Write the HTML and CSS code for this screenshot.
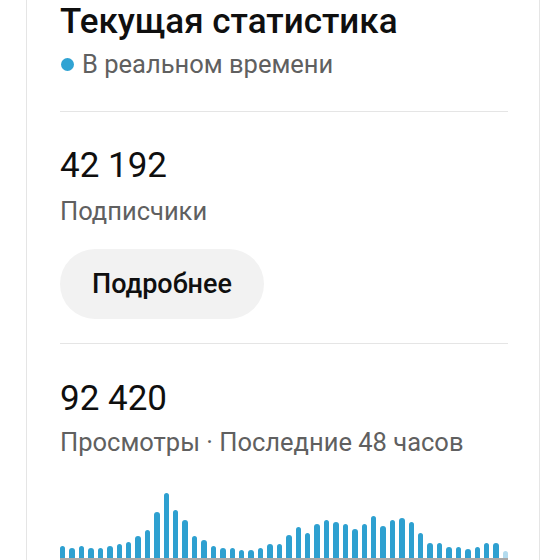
FILE: index.html
```html
<!DOCTYPE html>
<html lang="ru">
<head>
<meta charset="utf-8">
<title>Текущая статистика</title>
<link rel="stylesheet" href="styles.css">
</head>
<body>
<div class="card">
  <h2 class="title">Текущая статистика</h2>
  <div class="live"><span class="dot"></span><span>В реальном времени</span></div>
  <hr class="divider">
  <div class="metric">42 192</div>
  <div class="label">Подписчики</div>
  <button class="btn">Подробнее</button>
  <hr class="divider divider-2">
  <div class="metric metric-2">92 420</div>
  <div class="label label-2">Просмотры · Последние 48 часов</div>
  <div class="chart">
    <div class="bar" style="height:12px"></div>
    <div class="bar" style="height:10px"></div>
    <div class="bar" style="height:12px"></div>
    <div class="bar" style="height:10px"></div>
    <div class="bar" style="height:10px"></div>
    <div class="bar" style="height:12px"></div>
    <div class="bar" style="height:14px"></div>
    <div class="bar" style="height:16px"></div>
    <div class="bar" style="height:22px"></div>
    <div class="bar" style="height:28px"></div>
    <div class="bar" style="height:46px"></div>
    <div class="bar" style="height:65px"></div>
    <div class="bar" style="height:48px"></div>
    <div class="bar" style="height:38px"></div>
    <div class="bar" style="height:22px"></div>
    <div class="bar" style="height:18px"></div>
    <div class="bar" style="height:12px"></div>
    <div class="bar" style="height:10px"></div>
    <div class="bar" style="height:10px"></div>
    <div class="bar" style="height:8px"></div>
    <div class="bar" style="height:8px"></div>
    <div class="bar" style="height:10px"></div>
    <div class="bar" style="height:14px"></div>
    <div class="bar" style="height:14px"></div>
    <div class="bar" style="height:23px"></div>
    <div class="bar" style="height:31px"></div>
    <div class="bar" style="height:25px"></div>
    <div class="bar" style="height:34px"></div>
    <div class="bar" style="height:38px"></div>
    <div class="bar" style="height:36px"></div>
    <div class="bar" style="height:34px"></div>
    <div class="bar" style="height:29px"></div>
    <div class="bar" style="height:34px"></div>
    <div class="bar" style="height:42px"></div>
    <div class="bar" style="height:32px"></div>
    <div class="bar" style="height:38px"></div>
    <div class="bar" style="height:40px"></div>
    <div class="bar" style="height:36px"></div>
    <div class="bar" style="height:25px"></div>
    <div class="bar" style="height:15px"></div>
    <div class="bar" style="height:15px"></div>
    <div class="bar" style="height:11px"></div>
    <div class="bar" style="height:11px"></div>
    <div class="bar" style="height:9px"></div>
    <div class="bar" style="height:11px"></div>
    <div class="bar" style="height:15px"></div>
    <div class="bar" style="height:15px"></div>
    <div class="bar bar-current" style="height:7px"></div>
  </div>
</div>
</body>
</html>
```
FILE: styles.css
```css
html, body {
  margin: 0;
  padding: 0;
  background: #ffffff;
  overflow: hidden;
  height: 560px;
}

body {
  font-family: Roboto, "Noto Sans", "Liberation Sans", sans-serif;
  color: #0f0f0f;
}

.card {
  box-sizing: border-box;
  width: 514px;
  margin-left: 26px;
  padding: 2px 31px 40px 33px;
  border: 1px solid #e5e5e5;
  border-top: none;
  background: #ffffff;
}

.title {
  margin: 0;
  font-size: 35px;
  line-height: 40px;
  font-weight: 500;
  color: #0f0f0f;
}

.live {
  display: flex;
  align-items: center;
  gap: 8px;
  margin-top: 7px;
  font-size: 25.5px;
  line-height: 30px;
  color: #606060;
}

.dot {
  width: 13px;
  height: 13px;
  margin-left: 1px;
  border-radius: 50%;
  background: #30a3d3;
  flex: none;
}

.divider {
  margin: 32px 0 0;
  height: 1px;
  border: none;
  background: #e5e5e5;
}

.metric {
  margin-top: 34px;
  font-size: 35px;
  line-height: 40px;
  font-weight: 400;
  color: #0f0f0f;
}

.label {
  margin-top: 10px;
  font-size: 25.5px;
  line-height: 30px;
  color: #606060;
}

.btn {
  display: flex;
  align-items: center;
  height: 70px;
  margin-top: 23px;
  padding: 0 32px;
  border: none;
  border-radius: 35px;
  background: #f2f2f2;
  font-family: inherit;
  font-size: 27px;
  font-weight: 500;
  color: #0f0f0f;
}

.divider-2 {
  margin-top: 24px;
}

.metric-2 {
  margin-top: 35px;
}

.label-2 {
  margin-top: 8px;
}

.chart {
  display: flex;
  align-items: flex-end;
  gap: 4px;
  height: 72px;
  margin-top: 29px;
  border-bottom: 2px solid #a8a8a8;
}

.bar {
  flex: 1;
  background: #2ea0d0;
  border-radius: 3px 3px 0 0;
}

.bar-current {
  background: #b3dbee;
}
```
